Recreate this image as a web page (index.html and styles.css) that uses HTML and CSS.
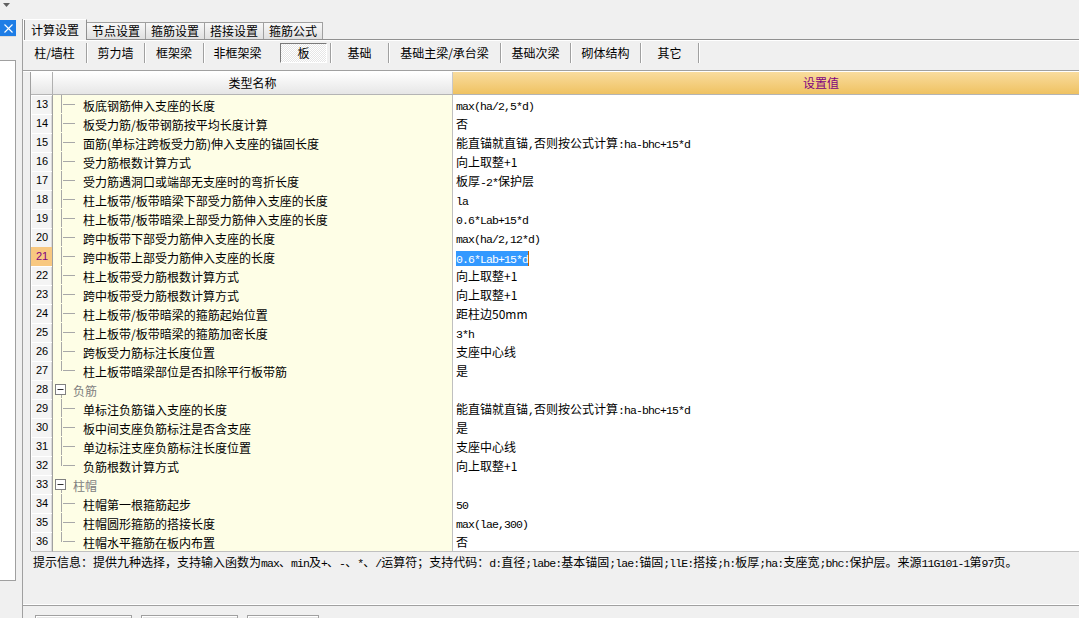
FILE: index.html
```html
<!DOCTYPE html>
<html lang="zh-CN">
<head>
<meta charset="utf-8">
<title>计算设置</title>
<link rel="stylesheet" href="styles.css">
</head>
<body>
<div class="side">
  <div class="side-top"><svg width="7" height="4" viewBox="0 0 7 4"><polygon points="0,0 7,0 3.5,4" fill="#606060"/></svg></div>
  <div class="side-close"><svg width="9" height="9" viewBox="0 0 9 9"><path d="M0.5 0.5 L8.5 8.5 M8.5 0.5 L0.5 8.5" stroke="#fff" stroke-width="1.1"/></svg></div>
  <div class="side-gap"></div>
  <div class="side-list"></div>
</div>
<div class="gutter"></div>
<div class="main">
  <div class="spacer"></div>
  <div class="frame">
    <div class="tabs">
      <div class="tab active">计算设置</div>
      <div class="tab">节点设置</div>
      <div class="tab">箍筋设置</div>
      <div class="tab">搭接设置</div>
      <div class="tab">箍筋公式</div>
    </div>
    <div class="panel">
      <div class="subbar">
        <div class="sb b-col">柱/墙柱</div>
        <div class="sb b-wall">剪力墙</div>
        <div class="sb b-kjl">框架梁</div>
        <div class="sb b-fkjl">非框架梁</div>
        <div class="sb b-slab"><span class="pressed">板</span></div>
        <div class="sb b-jc">基础</div>
        <div class="sb b-jczl">基础主梁/承台梁</div>
        <div class="sb b-jccl">基础次梁</div>
        <div class="sb b-qt">砌体结构</div>
        <div class="sb b-other">其它</div>
      </div>
      <div class="gridwrap">
        <div class="grid">
          <div class="hdr">
            <div class="h-rn"></div>
            <div class="h-nm">类型名称</div>
            <div class="h-vl">设置值</div>
          </div>
          <div class="row"><div class="rn">13</div><div class="nm"><i class="tr mid"></i>板底钢筋伸入支座的长度</div><div class="vl"><span class="m">max(ha/2,5*d)</span></div></div>
          <div class="row"><div class="rn">14</div><div class="nm"><i class="tr mid"></i>板受力筋/板带钢筋按平均长度计算</div><div class="vl">否</div></div>
          <div class="row"><div class="rn">15</div><div class="nm"><i class="tr mid"></i>面筋(单标注跨板受力筋)伸入支座的锚固长度</div><div class="vl">能直锚就直锚<span class="m">,</span>否则按公式计算<span class="m">:ha-bhc+15*d</span></div></div>
          <div class="row"><div class="rn">16</div><div class="nm"><i class="tr mid"></i>受力筋根数计算方式</div><div class="vl">向上取整+1</div></div>
          <div class="row"><div class="rn">17</div><div class="nm"><i class="tr mid"></i>受力筋遇洞口或端部无支座时的弯折长度</div><div class="vl">板厚<span class="m">-2*</span>保护层</div></div>
          <div class="row"><div class="rn">18</div><div class="nm"><i class="tr mid"></i>柱上板带/板带暗梁下部受力筋伸入支座的长度</div><div class="vl"><span class="m">la</span></div></div>
          <div class="row"><div class="rn">19</div><div class="nm"><i class="tr mid"></i>柱上板带/板带暗梁上部受力筋伸入支座的长度</div><div class="vl"><span class="m">0.6*Lab+15*d</span></div></div>
          <div class="row"><div class="rn">20</div><div class="nm"><i class="tr mid"></i>跨中板带下部受力筋伸入支座的长度</div><div class="vl"><span class="m">max(ha/2,12*d)</span></div></div>
          <div class="row"><div class="rn cur">21</div><div class="nm"><i class="tr mid"></i>跨中板带上部受力筋伸入支座的长度</div><div class="vl"><span class="sel"><span class="m">0.6*Lab+15*d</span></span></div></div>
          <div class="row"><div class="rn">22</div><div class="nm"><i class="tr mid"></i>柱上板带受力筋根数计算方式</div><div class="vl">向上取整+1</div></div>
          <div class="row"><div class="rn">23</div><div class="nm"><i class="tr mid"></i>跨中板带受力筋根数计算方式</div><div class="vl">向上取整+1</div></div>
          <div class="row"><div class="rn">24</div><div class="nm"><i class="tr mid"></i>柱上板带/板带暗梁的箍筋起始位置</div><div class="vl">距柱边50mm</div></div>
          <div class="row"><div class="rn">25</div><div class="nm"><i class="tr mid"></i>柱上板带/板带暗梁的箍筋加密长度</div><div class="vl"><span class="m">3*h</span></div></div>
          <div class="row"><div class="rn">26</div><div class="nm"><i class="tr mid"></i>跨板受力筋标注长度位置</div><div class="vl">支座中心线</div></div>
          <div class="row"><div class="rn">27</div><div class="nm"><i class="tr end"></i>柱上板带暗梁部位是否扣除平行板带筋</div><div class="vl">是</div></div>
          <div class="row"><div class="rn">28</div><div class="nm grp"><i class="tg"><svg width="11" height="11" viewBox="0 0 11 11"><rect x="0.5" y="0.5" width="10" height="10" fill="#fff" stroke="#808080"/><path d="M2.5 5.5 H8.5" stroke="#303030"/></svg></i>负筋</div><div class="vl"></div></div>
          <div class="row"><div class="rn">29</div><div class="nm"><i class="tr mid"></i>单标注负筋锚入支座的长度</div><div class="vl">能直锚就直锚<span class="m">,</span>否则按公式计算<span class="m">:ha-bhc+15*d</span></div></div>
          <div class="row"><div class="rn">30</div><div class="nm"><i class="tr mid"></i>板中间支座负筋标注是否含支座</div><div class="vl">是</div></div>
          <div class="row"><div class="rn">31</div><div class="nm"><i class="tr mid"></i>单边标注支座负筋标注长度位置</div><div class="vl">支座中心线</div></div>
          <div class="row"><div class="rn">32</div><div class="nm"><i class="tr end"></i>负筋根数计算方式</div><div class="vl">向上取整+1</div></div>
          <div class="row"><div class="rn">33</div><div class="nm grp"><i class="tg"><svg width="11" height="11" viewBox="0 0 11 11"><rect x="0.5" y="0.5" width="10" height="10" fill="#fff" stroke="#808080"/><path d="M2.5 5.5 H8.5" stroke="#303030"/></svg></i>柱帽</div><div class="vl"></div></div>
          <div class="row"><div class="rn">34</div><div class="nm"><i class="tr mid"></i>柱帽第一根箍筋起步</div><div class="vl"><span class="m">50</span></div></div>
          <div class="row"><div class="rn">35</div><div class="nm"><i class="tr mid"></i>柱帽圆形箍筋的搭接长度</div><div class="vl"><span class="m">max(lae,300)</span></div></div>
          <div class="row"><div class="rn">36</div><div class="nm"><i class="tr end"></i>柱帽水平箍筋在板内布置</div><div class="vl">否</div></div>
        </div>
      </div>
      <div class="hint">提示信息：提供九种选择，支持输入函数为<span class="m">max</span>、<span class="m">min</span>及<span class="m">+</span>、<span class="m">-</span>、<span class="m">*</span>、<span class="m">/</span>运算符；支持代码：<span class="m">d:</span>直径<span class="m">;labe:</span>基本锚固<span class="m">;lae:</span>锚固<span class="m">;llE:</span>搭接<span class="m">;h:</span>板厚<span class="m">;ha:</span>支座宽<span class="m">;bhc:</span>保护层。来源<span class="m">11G101-1</span>第<span class="m">97</span>页。</div>
    </div>
    <div class="btns">
      <div class="btn"></div>
      <div class="btn"></div>
      <div class="btn short"></div>
    </div>
  </div>
</div>
</body>
</html>
```
FILE: styles.css
```css
* { box-sizing: border-box; margin: 0; padding: 0; }
html, body { width: 1079px; height: 618px; overflow: hidden; }
body {
  background: #f0f0f0;
  font-family: "Noto Sans CJK SC", "Noto Sans", sans-serif;
  font-size: 12px;
  color: #000;
  display: flex;
}

/* left strip */
.side { width: 16px; flex: none; display: flex; flex-direction: column; }
.side-top { height: 20px; padding: 3px 0 0 3px; }
.side-top svg { display: block; }
.side-close { height: 16px; background: #1e7de6; display: flex; align-items: center; justify-content: center; }
.side-close svg { display: block; }
.side-gap { height: 24px; border-top: 1px solid #dcdcdc; }
.side-list { height: 521px; background: #fff; border: 1px solid #a0a0a0; border-left: none; }
.gutter { width: 6px; flex: none; }

.main { flex: 1; min-width: 0; display: flex; flex-direction: column; }
.spacer { height: 19px; flex: none; }
.frame { flex: 1; border-left: 1px solid #a0a0a0; display: flex; flex-direction: column; overflow: hidden; }

/* tabs */
.tabs { height: 20px; flex: none; display: flex; align-items: flex-end; }
.tab {
  height: 17px;
  padding: 0 5px;
  border: 1px solid #a0a0a0;
  border-bottom: none;
  margin-right: -1px;
  background: linear-gradient(#f8f8f8, #e0e0e0);
  line-height: 15px;
  white-space: nowrap;
}
.tab.active {
  height: 21px;
  margin-bottom: -1px;
  padding: 0 7px;
  background: #f0f0f0;
  border-color: #909090;
  border-left-color: #fff;
  border-top-color: #fff;
  box-shadow: 1px 0 0 #909090 inset;
  line-height: 19px;
  position: relative;
  z-index: 1;
}

/* panel */
.panel { height: 567px; flex: none; border-top: 1px solid #909090; border-bottom: 1px solid #a0a0a0; display: flex; flex-direction: column; }
.subbar { height: 31px; flex: none; border-top: 1px solid #fff; border-bottom: 1px solid #a0a0a0; padding-top: 2px; display: flex; }
.sb { height: 20px; line-height: 20px; text-align: center; white-space: nowrap; border-right: 1px solid #a0a0a0; box-shadow: 1px 0 0 #fff; }
.b-col { width: 64px; }
.b-wall { width: 58px; }
.b-kjl { width: 59px; }
.b-fkjl { width: 67px; border-right: none; box-shadow: none; }
.b-slab { width: 60px; }
.b-jc { width: 58px; }
.b-jczl { width: 112px; }
.b-jccl { width: 70px; }
.b-qt { width: 70px; }
.b-other { width: 58px; }
.pressed {
  display: inline-block;
  width: 47px;
  height: 20px;
  line-height: 18px;
  border: 1px solid;
  border-color: #7a7a7a #ffffff #ffffff #7a7a7a;
  background: repeating-conic-gradient(#ffffff 0 25%, #e6e6e6 0 50%) 0 0 / 2px 2px;
  margin-left: 6px;
}

/* grid */
.gridwrap { height: 480px; flex: none; border-top: 1px solid #fff; padding-left: 7px; }
.grid { width: 1159px; border-left: 1px solid #a0a0a0; }
.hdr, .row { display: grid; grid-template-columns: 22px 400px 736px; }
.hdr { height: 23px; border-bottom: 1px solid #b4b4b4; }
.h-rn { background: linear-gradient(#ffffff, #e6e6e6); border-right: 1px solid #b0b0b0; }
.h-nm { background: linear-gradient(#ffffff, #e6e6e6); text-align: center; line-height: 22px; border-right: 1px solid #c8c8c8; }
.h-vl { background: linear-gradient(#f9dc9e, #efc262); color: #800080; text-align: center; line-height: 22px; }

.row { height: 19px; }
.rn {
  background: #f4f4f4;
  border-right: 1px solid #a0a0a0;
  border-bottom: 1px solid #c4c4c4;
  box-shadow: inset 1px 1px 0 #fff, inset -1px 0 0 #dadada;
  font-family: "Liberation Sans", sans-serif;
  font-size: 11px;
  line-height: 19px;
  padding-left: 5px;
}
.rn.cur { background: #f8c880; color: #800080; box-shadow: none; }
.nm {
  background: #fefee6;
  border-right: 1px solid #c0c0c0;
  border-bottom: 1px solid #c0c0c0;
  display: flex;
  align-items: center;
  white-space: nowrap;
  padding-top: 1px;
}
.nm.grp { color: #808080; }
.vl {
  background: #fff;
  border-bottom: 1px solid #c0c0c0;
  padding: 1px 0 0 3px;
  line-height: 17px;
  white-space: nowrap;
}

.tr {
  display: block;
  flex: none;
  width: 30px;
  height: 18px;
  margin-top: -1px;
  align-self: flex-start;
}
.tr.mid {
  background:
    linear-gradient(#a8a8a8, #a8a8a8) 8px 0 / 1px 100% no-repeat,
    linear-gradient(#a8a8a8, #a8a8a8) 10px 9px / 12px 1px no-repeat;
}
.tr.end {
  background:
    linear-gradient(#a8a8a8, #a8a8a8) 8px 0 / 1px 10px no-repeat,
    linear-gradient(#a8a8a8, #a8a8a8) 10px 9px / 12px 1px no-repeat;
}
.tg {
  display: block;
  flex: none;
  width: 20px;
  height: 18px;
  margin-top: -1px;
  align-self: flex-start;
  padding: 4px 0 0 2px;
  background: linear-gradient(#a8a8a8, #a8a8a8) 8px 15px / 1px 4px no-repeat;
}
.tg svg { display: block; }

.m {
  font-family: "Liberation Mono", monospace;
  font-size: 11.5px;
  letter-spacing: -0.9px;
}
.sel {
  display: inline-block;
  background: #3399ff;
  color: #fff;
  line-height: 13px;
  vertical-align: middle;
  border-right: 1px solid #c06000;
}

/* hint */
.hint { flex: 1; padding: 4px 0 0 10px; white-space: nowrap; line-height: 14px; border-bottom: 1px solid #fff; }

/* bottom buttons */
.btns { height: 12px; flex: none; display: flex; gap: 9px; padding: 9px 0 0 12px; overflow: hidden; }
.btn { flex: none; width: 97px; height: 22px; border: 1px solid #a0a0a0; background: #e6e6e6; box-shadow: inset 1px 1px 0 #fff; }
.btn.short { width: 72px; }
```
